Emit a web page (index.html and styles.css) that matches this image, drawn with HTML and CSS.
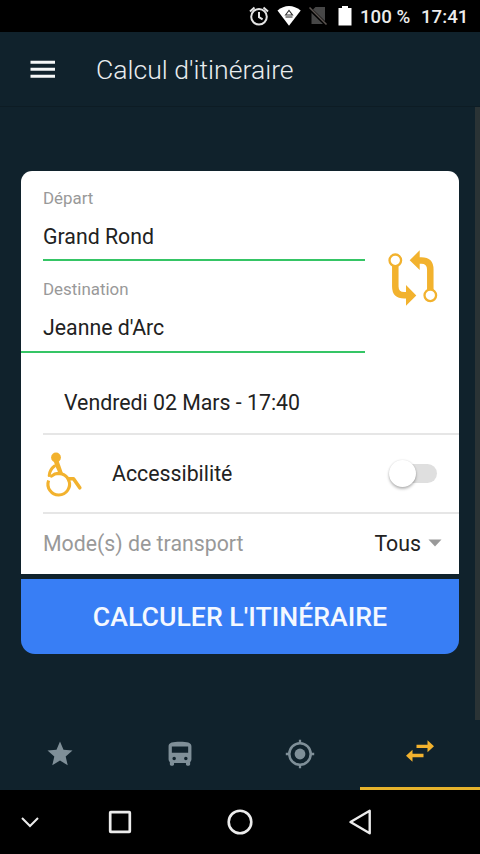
FILE: index.html
```
<!DOCTYPE html>
<html lang="fr">
<head>
<meta charset="utf-8">
<title>Calcul d'itinéraire</title>
<link rel="stylesheet" href="styles.css">
</head>
<body>
<div class="status">
  <svg class="status-icons" width="112" height="32" viewBox="246 0 112 32">
    <g fill="none" stroke="#e4e4e4" stroke-width="2">
      <circle cx="259" cy="16.800" r="7.800"/>
      <path d="M259 12v5.200l3.600 2.200M250 11.500l4.500-4M268 11.500l-4.500-4"/>
    </g>
    <path d="M277.500 10.500C281 7.500 285 6 289 6s8 1.500 11.700 4.500L289 25.700z" fill="#fff"/>
    <path d="M285.500 15l3.500-4.500 3.500 4.500z" fill="#fff" stroke="#333" stroke-width="1.100"/>
    <path d="M285.500 17h7" stroke="#333" stroke-width="1.100"/>
    <path d="M315.500 7H325v17h-13.500V11z" fill="#474747"/>
    <path d="M309 8l17.500 17" stroke="#000" stroke-width="3.500"/>
    <path d="M309.500 7.500l17 17" stroke="#5b5450" stroke-width="1.600"/>
    <path d="M342 6h6v2h3.500v17.500h-13V8h3.500z" fill="#fff"/>
  </svg>
  <span class="battery">100 %</span>
  <span class="clock">17:41</span>
</div>
<header class="header">
  <svg class="menu" width="26" height="18" viewBox="0 0 26 18"><path d="M.5 2.200h24.500M.5 9.200h24.500M.5 16.200h24.500" stroke="#f5f7f7" stroke-width="3"/></svg>
  <h1>Calcul d'itinéraire</h1>
</header>
<main class="content">
  <section class="card">
    <div class="route">
      <div class="fields">
        <div class="field"><label>Départ</label><span class="value">Grand Rond</span></div>
        <div class="field last"><label>Destination</label><span class="value">Jeanne d'Arc</span></div>
      </div>
      <svg class="swap" width="52" height="58" viewBox="387 249 52 58">
        <g fill="none" stroke="#f2b22e">
          <circle cx="395.300" cy="260.300" r="5.800" stroke-width="2.300"/>
          <circle cx="430.300" cy="295.300" r="5.800" stroke-width="2.300"/>
          <path d="M395.300 266v20.500q0 8.800 9 8.800h3M430.300 290v-20.500q0-9-9-9h-3" stroke-width="6.500"/>
        </g>
        <path d="M406 285l10.300 10.500L406 305.700zM419.700 250.300l-10 10 10 9.700z" fill="#f2b22e"/>
      </svg>
    </div>
    <div class="date">Vendredi 02 Mars - 17:40</div>
    <div class="row access">
      <svg class="wheelchair" width="40" height="46" viewBox="44 450 40 46">
        <g fill="none" stroke="#f2b22e" stroke-linejoin="round" stroke-linecap="round">
          <path d="M48.600 479.500A10.800 10.800 0 1 0 51.500 475.200A10.800 10.800 0 0 1 69.200 481" stroke-width="3.100" stroke-linecap="butt"/>
          <path d="M54.500 465q-4.800 3.500-5.300 9.500" stroke-width="3"/>
          <path d="M68.500 477.800h5l6.300 9" stroke-width="3.600"/>
        </g>
        <circle cx="56" cy="456.500" r="4.900" fill="#f2b22e"/>
        <path d="M53.500 459.500h5l4.700 13.500-3.700 1-4-8.500z" fill="#f2b22e"/>
      </svg>
      <span class="access-label">Accessibilité</span>
      <span class="toggle"><span class="knob"></span></span>
    </div>
    <div class="row modes">
      <span class="modes-label">Mode(s) de transport</span>
      <span class="modes-value">Tous</span>
      <svg class="caret" width="14" height="8" viewBox="0 0 14 8"><path d="M.5.500h13L7 7.500z" fill="#999"/></svg>
    </div>
  </section>
  <button class="submit">Calculer l'itinéraire</button>
</main>
<nav class="tabs">
  <span class="tab"><svg width="30" height="30" viewBox="0 0 24 24"><path d="M12 17.270L18.180 21l-1.640-7.030L22 9.240l-7.190-.61L12 2 9.190 8.630 2 9.240l5.460 4.730L5.820 21z"/></svg></span>
  <span class="tab"><svg width="28" height="28" viewBox="0 0 24 24"><path fill-rule="evenodd" d="M2.200 16.500c0 1 .4 1.800 1.100 2.400V20.800c0 .6.500 1.200 1.200 1.200h1.200c.7 0 1.200-.6 1.200-1.200V19.800h10.200v1c0 .6.500 1.200 1.200 1.200h1.200c.7 0 1.200-.6 1.200-1.200V18.900c.7-.6 1.100-1.500 1.100-2.400V5.500C21.800 2 18 1.500 12 1.500S2.200 2 2.200 5.500zM7 17.300a1.500 1.500 0 1 1 0-3 1.500 1.500 0 0 1 0 3zm10 0a1.500 1.500 0 1 1 0-3 1.500 1.500 0 0 1 0 3zM19 11H5V5.500h14z"/></svg></span>
  <span class="tab"><svg width="30" height="30" viewBox="0 0 30 30"><circle cx="15" cy="15" r="5.400"/><path d="M15 .8V5M15 25v4.200M.8 15H5M25 15h4.200" stroke="#7f8f98" stroke-width="2.300"/><circle cx="15" cy="15" r="10.700" fill="none" stroke="#7f8f98" stroke-width="2.500"/></svg></span>
  <span class="tab active"><svg class="arrows" width="30" height="24" viewBox="0 0 30 24"><path d="M11.500 5.700h11V1.200L29 7.300l-6.500 6V9h-11zM18.500 14.700h-11v-4L1 16.800l6.500 6v-4.500h11z"/></svg></span>
</nav>
<footer class="system">
  <svg width="20" height="12" viewBox="0 0 20 12"><path d="M2 2l8 8 8-8" stroke-width="2"/></svg>
  <svg width="24" height="24" viewBox="0 0 24 24"><rect x="2.200" y="2.200" width="19.600" height="19.600" rx=".5" stroke-width="2.700"/></svg>
  <svg width="28" height="28" viewBox="0 0 28 28"><circle cx="14" cy="14" r="11.300" stroke-width="2.600"/></svg>
  <svg width="24" height="28" viewBox="0 0 24 28"><path d="M21.700 2.800v22.400L2.500 14z" stroke-width="2.400" stroke-linejoin="round"/></svg>
</footer>
</body>
</html>
```

FILE: styles.css
```
* { box-sizing: border-box; }
body {
  margin: 0;
  width: 480px;
  height: 854px;
  display: flex;
  flex-direction: column;
  background: #10222c;
  font-family: Roboto, sans-serif;
  color: #222;
  overflow: hidden;
}
svg { display: block; flex: none; }

.status {
  height: 32px;
  display: flex;
  align-items: center;
  padding-left: 246px;
  background: #000;
  color: #ececec;
  font-size: 18.7px;
  font-weight: 500;
  line-height: 32px;
  white-space: nowrap;
}
.battery { width: 61px; margin-left: 2px; padding-top: 1px; }
.clock { padding-top: 1px; }

.header {
  height: 75px;
  display: flex;
  align-items: center;
  padding: 1px 0 0 30px;
  border-bottom: 1px solid #0d1c24;
}
.menu { margin-bottom: 1px; }
.header h1 {
  margin: 0 0 0 40px;
  color: #e9edef;
  font-size: 26.6px;
  font-weight: 300;
  line-height: 32px;
}

.content {
  height: 613px;
  padding: 64px 16px 0 21px;
  border-right: 5px solid #2a3335;
}
.card {
  height: 403px;
  background: #fff;
  border-radius: 11px 11px 0 0;
}
.route { height: 198px; display: flex; }
.fields { width: 344px; }
.field {
  height: 90px;
  margin-left: 22px;
  padding-top: 17px;
  border-bottom: 2px solid #35c565;
}
.field.last {
  height: 92px;
  margin-left: 0;
  padding: 18px 0 0 22px;
}
label {
  display: block;
  color: #999;
  font-size: 16.9px;
  line-height: 20px;
}
.value {
  display: block;
  margin-top: 16px;
  font-size: 21.3px;
  line-height: 26px;
}
.swap { margin: 78px 0 0 22px; }
.date {
  height: 64px;
  padding-left: 43px;
  font-size: 21.3px;
  line-height: 67px;
}
.row {
  margin-left: 22px;
  display: flex;
  align-items: center;
  border-top: 2px solid #e6e6e6;
  font-size: 21.3px;
}
.access { height: 79px; padding-right: 22px; }
.wheelchair { margin-left: 1px; }
.access-label { flex: 1; margin-left: 28px; }
.toggle {
  width: 44px;
  height: 19px;
  display: flex;
  align-items: center;
  border-radius: 10px;
  background: #dfdfdf;
}
.knob {
  width: 27px;
  height: 27px;
  margin-left: -4px;
  border-radius: 50%;
  background: #fff;
  box-shadow: 0 2px 3px rgba(0, 0, 0, .28), 0 0 2px rgba(0, 0, 0, .12);
}
.modes { height: 62px; padding: 0 17px 2px 0; }
.modes-label { flex: 1; color: #999; }
.modes-value { margin-right: 7px; }
.caret { margin-bottom: 1px; }
.submit {
  display: block;
  width: 438px;
  height: 75px;
  margin: 5px 0 0;
  padding: 0;
  border: 0;
  border-radius: 0 0 14px 14px;
  background: #387ef5;
  color: #f4f8ff;
  font: 500 26.7px/76px Roboto, sans-serif;
  text-transform: uppercase;
}

.tabs { height: 70px; display: flex; }
.tab {
  width: 120px;
  display: flex;
  align-items: center;
  justify-content: center;
  border-bottom: 3px solid transparent;
  fill: #7f8f98;
}
.tab.active { border-color: #e6b32c; fill: #f2b22e; }
.arrows { margin-bottom: 5px; }

.system {
  height: 64px;
  display: grid;
  grid-template-columns: 60px 120px 120px 120px;
  align-items: center;
  justify-items: center;
  background: #000;
}
.system svg { fill: none; stroke: #ececec; }
```
